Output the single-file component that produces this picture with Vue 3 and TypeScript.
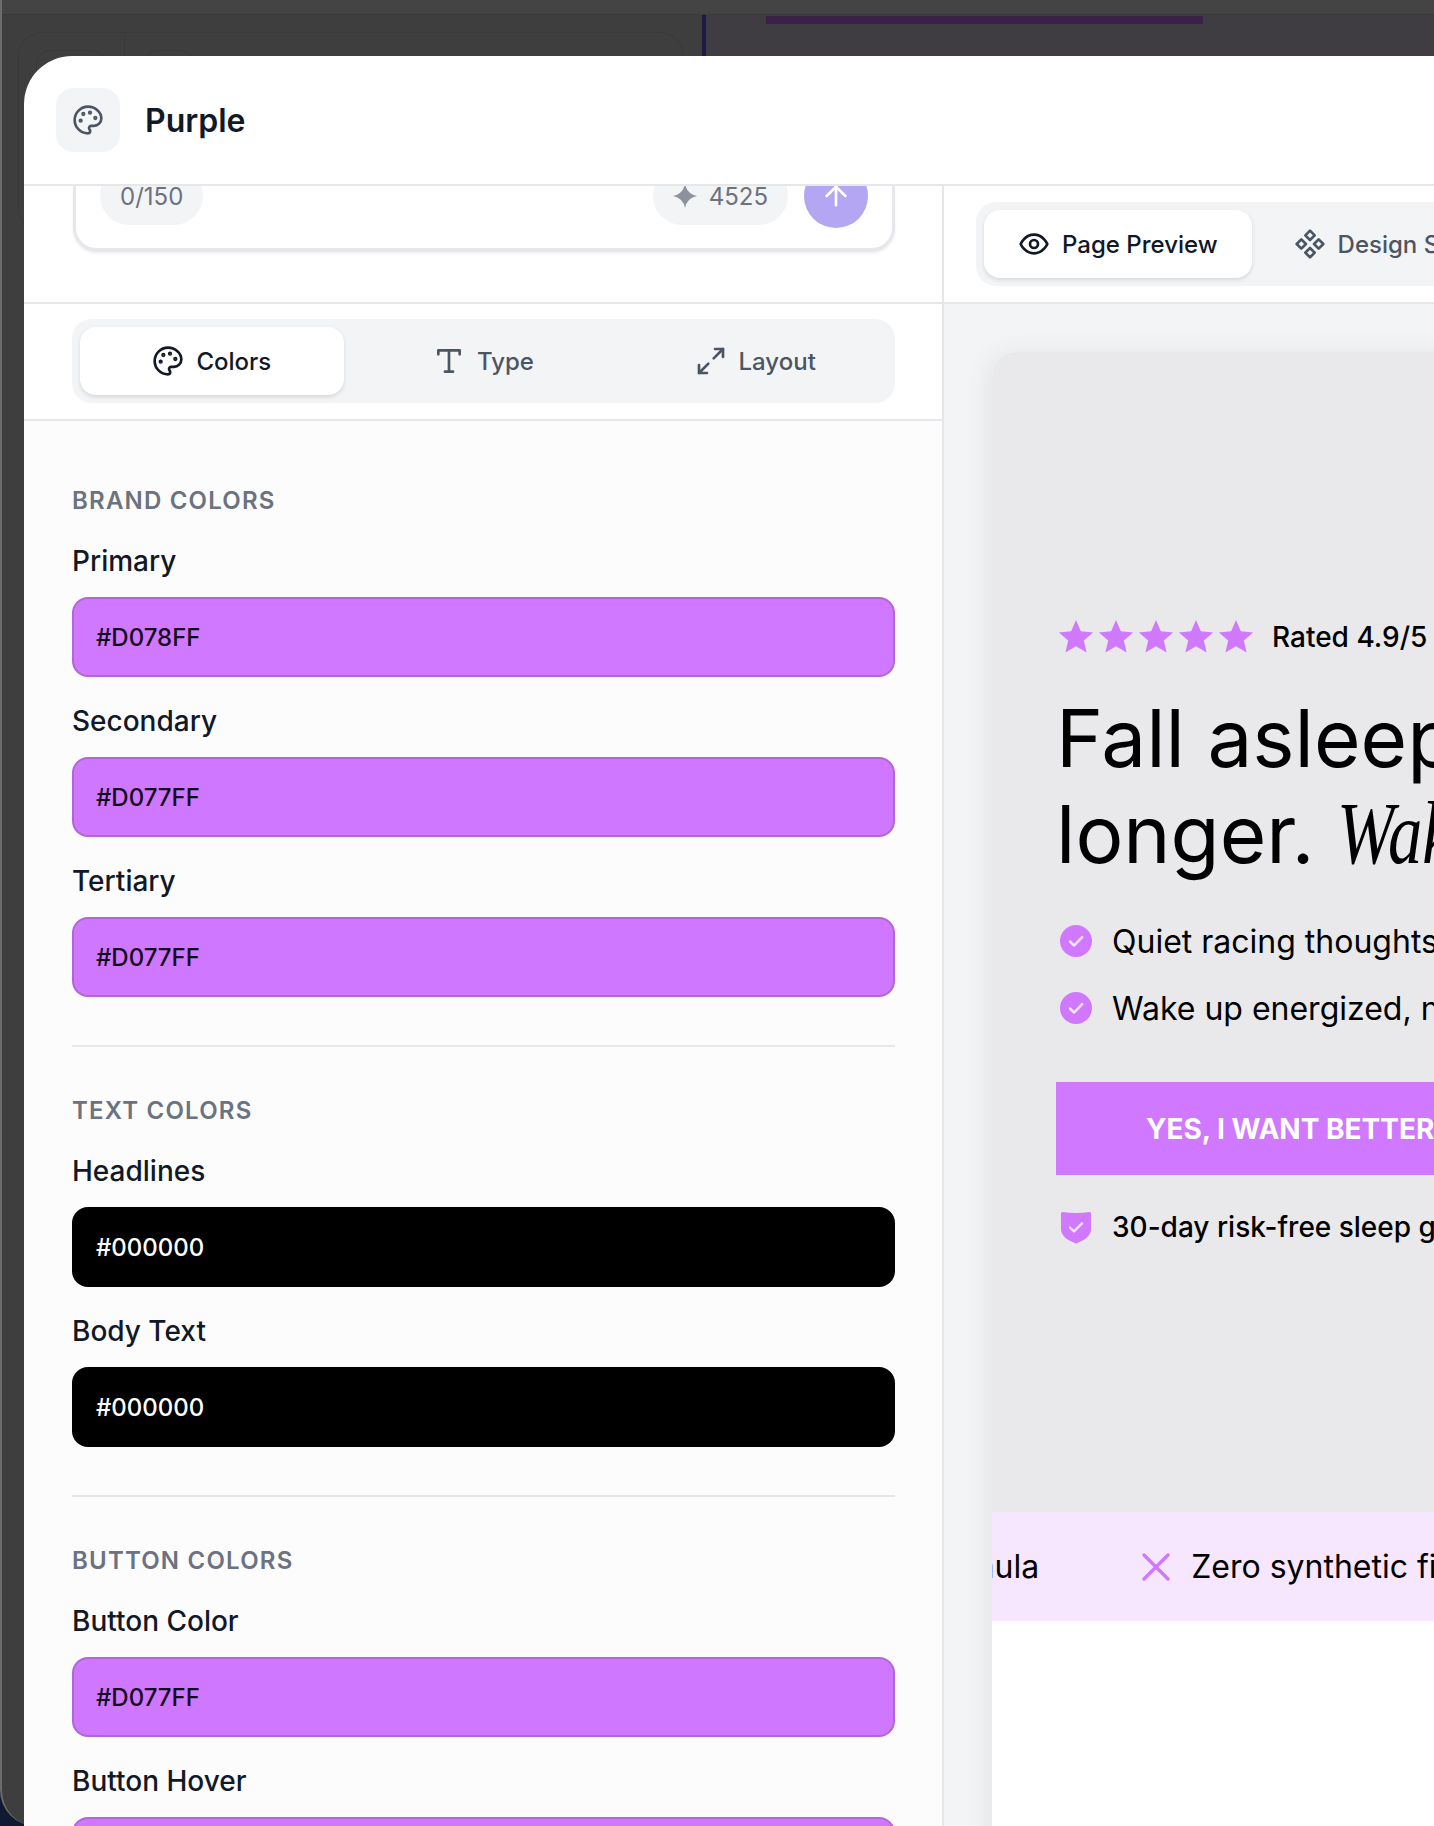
<template>
  <div class="screen">
    <div class="window">
      <div class="window-top"></div>
      <div class="window-body">
        <div class="window-left">
          <div class="ghost-panel">
            <span class="ghost-btn"></span>
            <span class="ghost-sep"></span>
            <span class="ghost-btn small"></span>
          </div>
        </div>
        <div class="window-right"><div class="progress"></div></div>
      </div>
    </div>

    <div class="modal">
      <header class="modal-header">
        <div class="header-icon">
          <svg width="32" height="32" viewBox="0 0 24 24" class="line-icon">
            <circle cx="13.5" cy="6.5" r=".6" fill="currentColor" />
            <circle cx="17.5" cy="10.5" r=".6" fill="currentColor" />
            <circle cx="8.5" cy="7.5" r=".6" fill="currentColor" />
            <circle cx="6.5" cy="12.5" r=".6" fill="currentColor" />
            <path :d="palettePath" />
          </svg>
        </div>
        <h1 class="modal-title">Purple</h1>
      </header>

      <div class="modal-body">
        <aside class="settings">
          <div class="composer-wrap">
            <div class="composer">
              <span class="chip">0/150</span>
              <span class="spacer"></span>
              <span class="chip credits">
                <svg width="24" height="24" viewBox="0 0 24 24">
                  <path d="M12 0Q14 10 24 12 14 14 12 24 10 14 0 12 10 10 12 0Z" fill="#8d929e" />
                </svg>
                4525
              </span>
              <button class="send">
                <svg width="32" height="32" viewBox="0 0 24 24" class="line-icon">
                  <path d="m5 12 7-7 7 7" />
                  <path d="M12 19V5" />
                </svg>
              </button>
            </div>
          </div>

          <div class="tabs-wrap">
            <div class="tabs three">
              <button class="tab active">
                <svg width="32" height="32" viewBox="0 0 24 24" class="line-icon">
                  <circle cx="13.5" cy="6.5" r=".6" fill="currentColor" />
                  <circle cx="17.5" cy="10.5" r=".6" fill="currentColor" />
                  <circle cx="8.5" cy="7.5" r=".6" fill="currentColor" />
                  <circle cx="6.5" cy="12.5" r=".6" fill="currentColor" />
                  <path :d="palettePath" />
                </svg>
                Colors
              </button>
              <button class="tab">
                <svg width="32" height="32" viewBox="0 0 24 24" class="line-icon">
                  <polyline points="4 7 4 4 20 4 20 7" />
                  <line x1="9" y1="20" x2="15" y2="20" />
                  <line x1="12" y1="4" x2="12" y2="20" />
                </svg>
                Type
              </button>
              <button class="tab">
                <svg width="32" height="32" viewBox="0 0 24 24" class="line-icon">
                  <polyline points="15 3 21 3 21 9" />
                  <line x1="21" y1="3" x2="14" y2="10" />
                  <polyline points="9 21 3 21 3 15" />
                  <line x1="3" y1="21" x2="10" y2="14" />
                </svg>
                Layout
              </button>
            </div>
          </div>

          <div class="color-list">
            <section v-for="group in colorGroups" :key="group.title" class="color-group">
              <h2 class="group-title">{{ group.title }}</h2>
              <div v-for="field in group.fields" :key="field.label" class="field">
                <div class="field-label">{{ field.label }}</div>
                <div class="swatch" :class="{ dark: field.value === '#000000' }" :style="{ backgroundColor: field.value }">
                  {{ field.value }}
                </div>
              </div>
            </section>
          </div>
        </aside>

        <main class="preview-pane">
          <div class="preview-tabs-wrap">
            <div class="tabs preview-tabs">
              <button class="tab active">
                <svg width="32" height="32" viewBox="0 0 24 24" class="line-icon">
                  <path d="M2 12s3-7 10-7 10 7 10 7-3 7-10 7-10-7-10-7Z" />
                  <circle cx="12" cy="12" r="3" />
                </svg>
                Page Preview
              </button>
              <button class="tab">
                <svg width="32" height="32" viewBox="0 0 24 24" class="line-icon">
                  <path d="M5.5 8.5 9 12l-3.5 3.5L2 12l3.5-3.5Z" />
                  <path d="m12 2 3.5 3.5L12 9 8.5 5.5 12 2Z" />
                  <path d="M18.5 8.5 22 12l-3.5 3.5L15 12l3.5-3.5Z" />
                  <path d="m12 15 3.5 3.5L12 22l-3.5-3.5L12 15Z" />
                </svg>
                Design System
              </button>
            </div>
          </div>

          <div class="preview-area">
            <div class="page">
              <div class="hero">
                <div class="rating">
                  <div class="stars">
                    <svg v-for="n in 5" :key="n" width="40" height="40" viewBox="0 0 40 40">
                      <polygon points="20 3 24.820 14.370 37.120 15.440 27.800 23.530 30.580 35.560 20 29.200 9.420 35.560 12.200 23.530 2.880 15.440 15.180 14.370" fill="#d078ff" />
                    </svg>
                  </div>
                  <span>Rated 4.9/5</span>
                </div>
                <h2 class="headline">
                  Fall asleep faster.<br />
                  longer. <em>Wake rested.</em>
                </h2>
                <ul class="benefits">
                  <li v-for="item in benefits" :key="item">
                    <svg width="40" height="40" viewBox="0 0 24 24">
                      <circle cx="12" cy="12" r="9.6" fill="#d078ff" />
                      <path d="m8.4 12.3 2.500 2.400 4.800-5" fill="none" stroke="#f4e4fd" stroke-width="1.5" stroke-linecap="round" stroke-linejoin="round" />
                    </svg>
                    {{ item }}
                  </li>
                </ul>
                <button class="cta">YES, I WANT BETTER SLEEP</button>
                <div class="guarantee">
                  <svg width="40" height="40" viewBox="0 0 40 40">
                    <path d="M5 6.500Q5 5 6.500 5Q20 7 33.500 5Q35 5 35 6.500V22Q35 31 20 36.500Q5 31 5 22Z" fill="#d078ff" />
                    <path d="m14 20.500 4 3.800 8-8" fill="none" stroke="#f4e4fd" stroke-width="2.400" stroke-linecap="round" stroke-linejoin="round" />
                  </svg>
                  30-day risk-free sleep guarantee
                </div>
              </div>
              <div class="strip">
                <div class="strip-track">
                  <span v-for="item in stripItems" :key="item" class="strip-item">
                    <svg width="48" height="48" viewBox="0 0 24 24" class="x-icon">
                      <path d="M18 6 6 18" />
                      <path d="m6 6 12 12" />
                    </svg>
                    {{ item }}
                  </span>
                </div>
              </div>
            </div>
          </div>
        </main>
      </div>
    </div>
  </div>
</template>

<script setup lang="ts">
interface ColorField {
  label: string
  value: string
}

interface ColorGroup {
  title: string
  fields: ColorField[]
}

const palettePath =
  'M12 2C6.500 2 2 6.500 2 12s4.500 10 10 10c.926 0 1.648-.746 1.648-1.688 0-.437-.18-.835-.437-1.125-.29-.289-.438-.652-.438-1.125a1.640 1.640 0 0 1 1.668-1.668h1.996c3.051 0 5.555-2.503 5.555-5.554C21.965 6.012 17.461 2 12 2z'

const colorGroups: ColorGroup[] = [
  {
    title: 'BRAND COLORS',
    fields: [
      { label: 'Primary', value: '#D078FF' },
      { label: 'Secondary', value: '#D077FF' },
      { label: 'Tertiary', value: '#D077FF' }
    ]
  },
  {
    title: 'TEXT COLORS',
    fields: [
      { label: 'Headlines', value: '#000000' },
      { label: 'Body Text', value: '#000000' }
    ]
  },
  {
    title: 'BUTTON COLORS',
    fields: [
      { label: 'Button Color', value: '#D077FF' },
      { label: 'Button Hover', value: '#D077FF' }
    ]
  }
]

const benefits = ['Quiet racing thoughts naturally', 'Wake up energized, not groggy']
const stripItems = ['Clinically tested formula', 'Zero synthetic fillers']
</script>

<style scoped>
.screen {
  position: relative;
  width: 1434px;
  height: 1826px;
  overflow: hidden;
  background: #101a33;
  font-family: Inter, "Liberation Sans", sans-serif;
}

.window {
  height: 100%;
  display: flex;
  flex-direction: column;
  background: #3e3e3e;
  border-left: 2px solid #6c6c6c;
  border-bottom-left-radius: 36px;
  overflow: hidden;
}

.window-top {
  height: 14px;
  flex: none;
  background: #444444;
  border-bottom: 1px solid #3a3a3a;
}

.window-body {
  flex: 1;
  display: flex;
}

.window-left {
  width: 704px;
  flex: none;
  box-sizing: border-box;
  padding: 17px 0 0 16px;
  border-right: 4px solid #1c1a45;
}

.ghost-panel {
  display: flex;
  align-items: flex-start;
  gap: 18px;
  height: 200px;
  width: 666px;
  box-sizing: border-box;
  padding: 17px;
  border: 1px solid #393939;
  border-radius: 24px;
}

.ghost-btn {
  width: 68px;
  height: 60px;
  border: 1px solid #393939;
  border-radius: 14px;
}

.ghost-btn.small {
  width: 50px;
}

.ghost-sep {
  width: 1px;
  height: 100px;
  margin-top: -17px;
  background: #393939;
}

.window-right {
  flex: 1;
  background: #3f3d42;
}

.progress {
  width: 437px;
  height: 8px;
  margin-top: 1px;
  margin-left: 60px;
  background: #3b2148;
}

.modal {
  position: absolute;
  left: 24px;
  top: 56px;
  width: 1500px;
  height: 1800px;
  display: flex;
  flex-direction: column;
  background: #ffffff;
  border-radius: 48px 0 0 0;
  overflow: hidden;
}

.modal-header {
  height: 130px;
  flex: none;
  display: flex;
  align-items: center;
  gap: 25px;
  padding-left: 32px;
  box-sizing: border-box;
  border-bottom: 2px solid #e5e7eb;
}

.header-icon {
  width: 64px;
  height: 64px;
  display: flex;
  align-items: center;
  justify-content: center;
  background: #f3f4f6;
  border-radius: 18px;
  color: #4b5563;
}

.modal-title {
  margin: 0;
  font-size: 32px;
  font-weight: 600;
  color: #111827;
}

.line-icon {
  flex: none;
  fill: none;
  stroke: currentColor;
  stroke-width: 2;
  stroke-linecap: round;
  stroke-linejoin: round;
}

.modal-body {
  flex: 1;
  display: flex;
  min-height: 0;
}

.settings {
  width: 920px;
  flex: none;
  box-sizing: border-box;
  border-right: 2px solid #e5e7eb;
}

.composer-wrap {
  height: 118px;
  box-sizing: border-box;
  display: flex;
  align-items: flex-end;
  padding: 0 47px 50px 49px;
  border-bottom: 2px solid #e5e7eb;
  overflow: hidden;
}

.composer {
  flex: 1;
  display: flex;
  align-items: flex-end;
  gap: 16px;
  height: 140px;
  box-sizing: border-box;
  padding: 0 24px 20px;
  background: #ffffff;
  border: 3px solid #e5e7eb;
  border-top: none;
  border-bottom-width: 4px;
  border-radius: 24px;
  box-shadow: 0 2px 3px rgba(0, 0, 0, 0.06);
}

.spacer {
  flex: 1;
}

.chip {
  display: flex;
  align-items: center;
  gap: 12px;
  height: 58px;
  margin-bottom: 3px;
  padding: 0 20px;
  background: #f3f4f6;
  border-radius: 29px;
  font-size: 24px;
  color: #6b7280;
}

.send {
  width: 64px;
  height: 64px;
  display: flex;
  align-items: center;
  justify-content: center;
  padding: 0;
  border: none;
  border-radius: 50%;
  background: #b5a6f3;
  color: #ffffff;
}

.tabs-wrap {
  height: 117px;
  box-sizing: border-box;
  padding: 15px 47px 0 48px;
  border-bottom: 2px solid #e5e7eb;
}

.tabs {
  display: flex;
  gap: 8px;
  height: 84px;
  box-sizing: border-box;
  padding: 8px;
  background: #f3f4f6;
  border-radius: 20px;
}

.three .tab {
  flex: 1;
}

.tab {
  display: flex;
  align-items: center;
  justify-content: center;
  gap: 12px;
  padding: 0 34px;
  border: none;
  border-radius: 16px;
  background: transparent;
  font-family: inherit;
  font-size: 24px;
  font-weight: 500;
  color: #4b5563;
  white-space: nowrap;
}

.tab.active {
  background: #ffffff;
  color: #111827;
  box-shadow: 0 2px 4px rgba(0, 0, 0, 0.12);
}

.color-list {
  height: 1400px;
  padding: 64px 47px 0 48px;
  background: #fcfcfd;
}

.color-group + .color-group {
  margin-top: 48px;
  padding-top: 48px;
  border-top: 2px solid #e5e7eb;
}

.group-title {
  margin: 0 0 26px;
  font-size: 24px;
  line-height: 32px;
  font-weight: 600;
  letter-spacing: 1.2px;
  color: #6b7280;
}

.field + .field {
  margin-top: 26px;
}

.field-label {
  margin-bottom: 18px;
  font-size: 28px;
  line-height: 36px;
  font-weight: 500;
  color: #111827;
}

.swatch {
  height: 80px;
  box-sizing: border-box;
  display: flex;
  align-items: center;
  padding: 0 22px;
  border: 2px solid rgba(0, 0, 0, 0.15);
  border-radius: 16px;
  font-size: 24px;
  font-weight: 500;
  color: #140a1e;
}

.swatch.dark {
  color: #ffffff;
}

.preview-pane {
  flex: 1;
  display: flex;
  flex-direction: column;
  min-width: 0;
}

.preview-tabs-wrap {
  height: 118px;
  flex: none;
  box-sizing: border-box;
  padding: 16px 0 0 32px;
  border-bottom: 2px solid #e5e7eb;
}

.preview-tabs {
  width: 800px;
}

.preview-area {
  flex: 1;
  padding: 48px 0 0 48px;
  background: #f3f4f6;
}

.page {
  height: 100%;
  background: #ffffff;
  border-radius: 24px 0 0 0;
  box-shadow: -6px 0 24px rgba(0, 0, 0, 0.06);
  overflow: hidden;
}

.hero {
  height: 1160px;
  box-sizing: border-box;
  display: flex;
  flex-direction: column;
  justify-content: center;
  padding: 0 0 0 64px;
  background: #e9e9eb;
  color: #000000;
}

.rating {
  display: flex;
  align-items: center;
  gap: 16px;
  font-size: 28px;
  font-weight: 500;
}

.stars {
  display: flex;
}

.headline {
  margin: 33px 0 35px;
  font-size: 80px;
  line-height: 96px;
  font-weight: 400;
  white-space: nowrap;
}

.headline em {
  display: inline-block;
  font-family: "Liberation Serif", serif;
  font-style: italic;
  font-size: 88px;
  transform: scaleX(0.78);
  transform-origin: left;
}

.benefits {
  display: flex;
  flex-direction: column;
  gap: 19px;
  margin: 0;
  padding: 0;
  list-style: none;
}

.benefits li {
  display: flex;
  align-items: center;
  gap: 16px;
  height: 48px;
  font-size: 32px;
  white-space: nowrap;
}

.benefits svg,
.guarantee svg,
.stars svg {
  flex: none;
}

.cta {
  width: 700px;
  height: 93px;
  flex: none;
  margin-top: 50px;
  padding: 0 0 0 90px;
  border: none;
  background: #d078ff;
  font-family: inherit;
  font-size: 28px;
  font-weight: 700;
  color: #ffffff;
  text-align: left;
  white-space: nowrap;
}

.guarantee {
  display: flex;
  align-items: center;
  gap: 16px;
  height: 40px;
  margin-top: 32px;
  font-size: 28px;
  font-weight: 500;
  white-space: nowrap;
}

.strip {
  height: 109px;
  display: flex;
  align-items: center;
  background: #f7e7fe;
  overflow: hidden;
}

.strip-track {
  display: flex;
  gap: 93px;
  transform: translateX(-375px);
  font-size: 32px;
  color: #000000;
  white-space: nowrap;
}

.strip-item {
  display: flex;
  align-items: center;
  gap: 11px;
}

.x-icon {
  flex: none;
  fill: none;
  stroke: #d078ff;
  stroke-width: 1.7;
  stroke-linecap: round;
}
</style>

<style>
html,
body {
  margin: 0;
  overflow: hidden;
}
</style>
